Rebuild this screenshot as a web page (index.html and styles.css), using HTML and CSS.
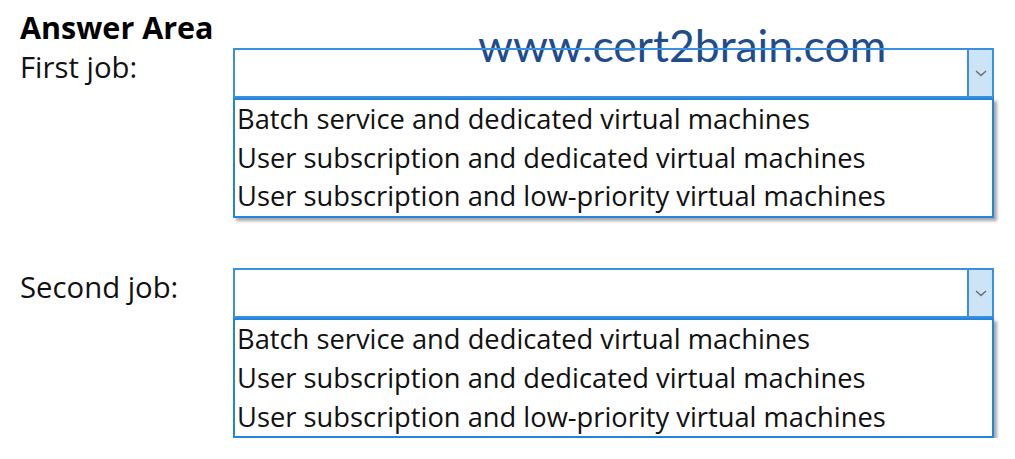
FILE: index.html
```html
<!DOCTYPE html>
<html lang="en">
<head>
    <meta charset="UTF-8">
    <meta name="viewport" content="width=device-width, initial-scale=1.0">
    <title>Answer Area</title>
    <link rel="stylesheet" href="styles.css">
</head>
<body>

    <div class="page">
        <h1 class="titulo">Answer Area</h1>

        <div class="marca">www.cert2brain.com</div>

        <!-- Primeira pergunta -->
        <div class="pergunta">
            <div class="rotulo">First job:</div>
            <div class="combo">
                <div class="caixa">
                    <span class="seta">
                        <svg width="12" height="7" viewBox="0 0 12 7"><path d="M1 1 L6 5.5 L11 1" fill="none" stroke="#6b6b6b" stroke-width="1.4"/></svg>
                    </span>
                </div>
                <ul class="opcoes">
                    <li>Batch service and dedicated virtual machines</li>
                    <li>User subscription and dedicated virtual machines</li>
                    <li>User subscription and low-priority virtual machines</li>
                </ul>
            </div>
        </div>

        <!-- Segunda pergunta -->
        <div class="pergunta">
            <div class="rotulo">Second job:</div>
            <div class="combo">
                <div class="caixa">
                    <span class="seta">
                        <svg width="12" height="7" viewBox="0 0 12 7"><path d="M1 1 L6 5.5 L11 1" fill="none" stroke="#6b6b6b" stroke-width="1.4"/></svg>
                    </span>
                </div>
                <ul class="opcoes">
                    <li>Batch service and dedicated virtual machines</li>
                    <li>User subscription and dedicated virtual machines</li>
                    <li>User subscription and low-priority virtual machines</li>
                </ul>
            </div>
        </div>
    </div>

</body>
</html>
```

FILE: styles.css
```css
body {
    margin: 0;
    padding: 0;
    background: #fff;
    font-family: "Open Sans", Lato, sans-serif;
    color: #111;
    overflow: hidden;
}

.page {
    position: relative;
    padding: 12px 0 0 20px;
}

.titulo {
    margin: 0;
    font-size: 30.5px;
    line-height: 30px;
    font-weight: bold;
    color: #000;
}

/* marca d'agua por cima da caixa */
.marca {
    position: absolute;
    left: 478px;
    top: 23px;
    font-family: Lato, sans-serif;
    font-size: 44.5px;
    line-height: 44.5px;
    color: #1f4d8c;
    z-index: 0;
}

.pergunta {
    display: grid;
    grid-template-columns: 213px 761px;
    margin-top: 6px;
    margin-bottom: 50px;
}

.pergunta + .pergunta {
    margin-top: 0;
    margin-bottom: 0;
}

.rotulo {
    font-size: 29.3px;
    line-height: 34px;
    padding-top: 2px;
    color: #111;
}

.combo {
    position: relative;
    z-index: 1;
}

.caixa {
    height: 46px;
    border: 2px solid #3a8fe0;
    display: flex;
    justify-content: flex-end;
}

.seta {
    width: 23px;
    background: #cde4f7;
    border-left: 2px solid #3a8fe0;
    display: flex;
    align-items: center;
    justify-content: center;
}

.opcoes {
    list-style-type: none;
    margin: 0;
    padding: 0 0 0 2px;
    border: 2px solid #2484dc;
    background: #fff;
    box-shadow: 3px 3px 3px rgba(0, 0, 0, 0.35);
}

.opcoes li {
    font-size: 27.3px;
    line-height: 38.7px;
    white-space: nowrap;
}
```
